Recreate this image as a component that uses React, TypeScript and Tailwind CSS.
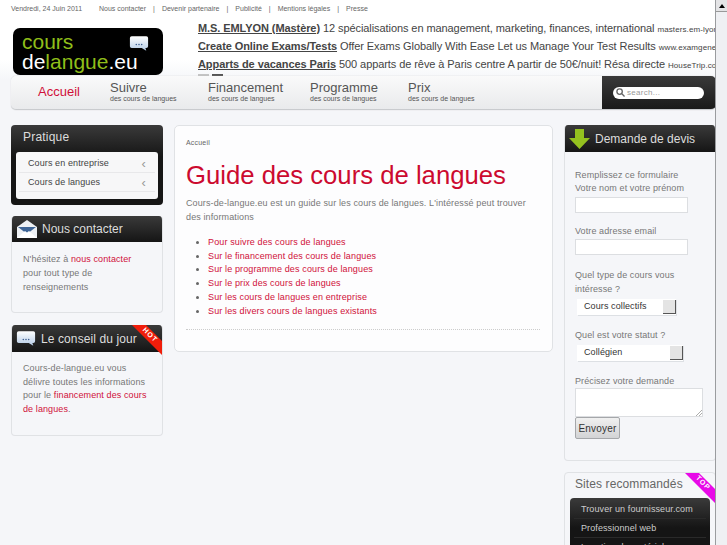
const sans = "font-['Liberation_Sans',Arial,sans-serif]";

const topLinks = ["Nous contacter", "Devenir partenaire", "Publicité", "Mentions légales", "Presse"];

const ads = [
  { title: "M.S. EMLYON (Mastère)", text: "12 spécialisations en management, marketing, finances, international", url: "masters.em-lyon.com" },
  { title: "Create Online Exams/Tests", text: "Offer Exams Globally With Ease Let us Manage Your Test Results", url: "www.examgenerator.com" },
  { title: "Apparts de vacances Paris", text: "500 apparts de rêve à Paris centre A partir de 50€/nuit! Résa directe", url: "HouseTrip.com" },
];

const navItems = [
  { label: "Suivre", w: "w-[98px]" },
  { label: "Financement", w: "w-[102px]" },
  { label: "Programme", w: "w-[98px]" },
  { label: "Prix", w: "w-[90px]" },
];

const guideLinks = [
  "Pour suivre des cours de langues",
  "Sur le financement des cours de langues",
  "Sur le programme des cours de langues",
  "Sur le prix des cours de langues",
  "Sur les cours de langues en entreprise",
  "Sur les divers cours de langues existants",
];

function ChatIcon({ className }: { className?: string }) {
  return (
    <svg viewBox="0 0 22 18" className={className}>
      <defs>
        <linearGradient id="bubble" x1="0" y1="0" x2="0" y2="1">
          <stop offset="0" stopColor="#ffffff" />
          <stop offset="1" stopColor="#b4cbe6" />
        </linearGradient>
      </defs>
      <path d="M3 1h16a2 2 0 0 1 2 2v9a2 2 0 0 1-2 2h-1l1 3-5-3H3a2 2 0 0 1-2-2V3a2 2 0 0 1 2-2z" fill="url(#bubble)" />
      <circle cx="8" cy="10" r=".8" fill="#33558a" />
      <circle cx="11" cy="10" r=".8" fill="#33558a" />
      <circle cx="14" cy="10" r=".8" fill="#33558a" />
    </svg>
  );
}

function MailIcon() {
  return (
    <svg viewBox="0 0 20 18" className="w-[20px] h-[18px] shrink-0">
      <path d="M0 7 10 0l10 7v11H0z" fill="#eef1f5" />
      <path d="M1 7h18l-9 7z" fill="#3f6597" />
      <path d="M0 18l8-7 2 1.500 2-1.500 8 7z" fill="#ffffff" />
    </svg>
  );
}

function ArrowIcon() {
  return (
    <svg viewBox="0 0 21 20" className="w-[21px] h-[20px] shrink-0">
      <path d="M6 0h9v9h6L10.500 20 0 9h6z" fill="#94c11f" />
    </svg>
  );
}

function Ribbon({ label, color }: { label: string; color: string }) {
  return (
    <div className="absolute top-0 right-0 w-[30px] h-[30px]">
      <div className={`absolute inset-0 [clip-path:polygon(0_0,14px_0,30px_16px,30px_30px)] ${color}`} />
      <div className="absolute w-[30px] h-[12px] top-[4px] left-[3px] rotate-45 text-center text-white text-[7px] leading-[12px] font-bold tracking-[1px]">
        {label}
      </div>
    </div>
  );
}

function SelectBox({ label, w, arrow }: { label: string; w: string; arrow: string }) {
  return (
    <div className={`h-[16px] bg-white flex items-center justify-between shadow-[1px_1px_0_#dde0e4] ${w}`}>
      <span className="pl-[7px] text-[9px] text-[#333]">{label}</span>
      <span className={`h-[14px] bg-[#e4e4e4] border-r border-b border-[#555] ${arrow}`} />
    </div>
  );
}

export default function App() {
  return (
    <div className={`${sans} flex w-[727px] h-[545px] overflow-hidden bg-[linear-gradient(#ffffff_0,#ffffff_60px,#f5f6f9_80px)] text-[#777]`}>
      <div className="w-[715px] shrink-0 pl-[11px] overflow-hidden">
        <div className="flex items-center h-[17px] pt-[1px] text-[7px] text-[#666]">
          <span className="w-[88px]">Vendredi, 24 Juin 2011</span>
          {topLinks.map((t, i) => (
            <span key={t} className="flex items-center">
              {i > 0 && <span className="mx-[7px]">|</span>}
              {t}
            </span>
          ))}
        </div>

        <div className="flex h-[59px] pt-[11px]">
          <div className="w-[150px] h-[47px] ml-[2px] rounded-[7px] bg-black relative shrink-0 px-[9px] leading-[20px] pt-[4px] text-[21px]">
            <div className="text-[#8fbe1a]">cours</div>
            <div className="text-white">
              de<span className="text-[#8fbe1a]">langue</span>.eu
            </div>
            <ChatIcon className="absolute top-[7px] right-[14px] w-[20px] h-[17px]" />
          </div>
          <div className="ml-[35px] flex-1 min-w-0 overflow-hidden text-[11px] text-[#444] tracking-[-0.08px] whitespace-nowrap -mt-[9px]">
            {ads.map((ad) => (
              <div key={ad.title} className="h-[18px] leading-[18px]">
                <span className="font-bold underline">{ad.title}</span> {ad.text}{" "}
                <span className="text-[8px] tracking-[0.1px]">{ad.url}</span>
              </div>
            ))}
            <div className="flex gap-[3px] mt-[1px]">
              <span className="w-[11px] h-[3px] bg-[#c4c4c4]" />
              <span className="w-[11px] h-[3px] bg-[#555]" />
            </div>
          </div>
        </div>

        <div className="relative w-[705px] h-[34px] flex rounded-[5px] overflow-hidden border-b border-[#c9cbce] shadow-[0_0_1px_#bbb] bg-[linear-gradient(#fafafa,#e9eaec)]">
          <div className="flex flex-1 items-center pb-[1px]">
            <span className="w-[99px] pl-[27px] text-[13px] text-[#d0103a]">Accueil</span>
            {navItems.map((n) => (
              <div key={n.label} className={n.w}>
                <div className="text-[13px] leading-[13px] text-[#555]">{n.label}</div>
                <div className="text-[7px] leading-[9px] text-[#555]">des cours de langues</div>
              </div>
            ))}
          </div>
          <div className="w-[114px] bg-[linear-gradient(#3a3a3a,#1a1a1a)] flex items-center pl-[11px] shrink-0">
            <div className="w-[91px] h-[12px] rounded-full bg-white flex items-center pl-[3px] gap-[2px]">
              <svg viewBox="0 0 10 10" className="w-[9px] h-[9px]" fill="none" stroke="#666" strokeWidth="1.500">
                <circle cx="4" cy="4" r="3" />
                <path d="M6.500 6.500 9.500 9.500" />
              </svg>
              <span className="text-[8px] text-[#999] tracking-[0.3px]">search...</span>
            </div>
          </div>
        </div>

        <div className="flex gap-[11px] mt-[15px] items-start w-[705px]">
          <div className="w-[152px] flex flex-col gap-[11px] shrink-0">
            <section className="h-[80px] rounded-[4px] bg-[linear-gradient(#3a3a3a,#151515_40%,#151515)] px-[5px]">
              <h3 className="text-[12px] h-[27px] leading-[25px] pl-[7px] text-[#ddd] tracking-[0.2px]">Pratique</h3>
              <div className="h-[47px] rounded-[3px] bg-[#f7f7f8] text-[9px] text-[#444] tracking-[0.1px]">
                {["Cours en entreprise", "Cours de langues"].map((l) => (
                  <div key={l} className="flex items-center justify-between h-[19px] mx-[3px] pt-[1px] first:h-[21px] first:pt-[3px] pl-[9px] pr-[9px] border-b border-[#e8e8ea]">
                    <span>{l}</span>
                    <span className="text-[13px] leading-none text-[#999]">‹</span>
                  </div>
                ))}
              </div>
            </section>

            <section className="h-[97px] rounded-[4px] border border-[#e0e2e5] border-t-0 overflow-hidden">
              <div className="h-[26px] -mx-[1px] flex items-center gap-[5px] pl-[6px] bg-[linear-gradient(#3a3a3a,#151515)]">
                <MailIcon />
                <span className="text-[12px] text-[#ddd]">Nous contacter</span>
              </div>
              <p className="text-[9px] leading-[14px] px-[11px] pt-[10px] tracking-[0.1px]">
                N'hésitez à <span className="text-[#d0103a]">nous contacter</span> pour tout type de renseignements
              </p>
            </section>

            <section className="relative h-[111px] mt-[1px] rounded-[4px] border border-[#e0e2e5] border-t-0 overflow-hidden">
              <div className="h-[27px] -mx-[1px] flex items-center gap-[5px] pl-[5px] bg-[linear-gradient(#3a3a3a,#151515)]">
                <ChatIcon className="w-[20px] h-[17px] shrink-0" />
                <span className="text-[12px] text-[#ddd] tracking-[0.1px]">Le conseil du jour</span>
              </div>
              <Ribbon label="HOT" color="bg-[#f01d0a]" />
              <p className="text-[9px] leading-[13.500px] px-[11px] pt-[10px] tracking-[0.1px]">
                Cours-de-langue.eu vous délivre toutes les informations pour le{" "}
                <span className="text-[#d0103a]">financement des cours de langues</span>.
              </p>
            </section>
          </div>

          <main className="w-[379px] h-[227px] shrink-0 rounded-[5px] border border-[#e0e2e5] bg-[#fdfdfe] px-[11px] pt-[12px]">
            <div className="text-[7px] leading-[9px] text-[#666] tracking-[0.2px]">Accueil</div>
            <h1 className="text-[25.700px] leading-[34px] mt-[11px] text-[#cc0a2f]">Guide des cours de langues</h1>
            <p className="text-[9px] leading-[14px] mt-[4px] tracking-[0.12px]">
              Cours-de-langue.eu est un guide sur les cours de langues. L'intéressé peut trouver des informations
            </p>
            <ul className="list-disc pl-[22px] mt-[12px] text-[9px] leading-[13.700px] text-[#d0103a] tracking-[0.13px] marker:text-[#666]">
              {guideLinks.map((l) => (
                <li key={l}>{l}</li>
              ))}
            </ul>
            <div className="mt-[11px] border-b border-dotted border-[#ccc] mr-[1px]" />
          </main>

          <div className="w-[152px] flex flex-col gap-[11px] shrink-0">
            <section className="h-[336px] rounded-[4px] border border-[#e0e2e5] border-t-0 overflow-hidden">
              <div className="h-[27px] -mx-[1px] flex items-center gap-[5px] pl-[5px] bg-[linear-gradient(#3a3a3a,#151515)]">
                <ArrowIcon />
                <span className="text-[12px] text-[#ddd]">Demande de devis</span>
              </div>
              <div className="px-[10px] pt-[17px] text-[9px] tracking-[0.1px]">
                <div className="leading-[13px]">Remplissez ce formulaire</div>
                <div className="leading-[13px]">Votre nom et votre prénom</div>
                <div className="w-[113px] h-[16px] bg-white border border-[#dcdee1] mt-[2px]" />
                <div className="leading-[13px] mt-[12px]">Votre adresse email</div>
                <div className="w-[113px] h-[16px] bg-white border border-[#dcdee1] mt-[1px]" />
                <div className="leading-[14px] mt-[13px]">Quel type de cours vous intéresse ?</div>
                <div className="mt-[3px] ml-[2px]">
                  <SelectBox label="Cours collectifs" w="w-[99px]" arrow="w-[13px]" />
                </div>
                <div className="leading-[13px] mt-[14px]">Quel est votre statut ?</div>
                <div className="mt-[3px] ml-[2px]">
                  <SelectBox label="Collégien" w="w-[106px]" arrow="w-[13px]" />
                </div>
                <div className="leading-[13px] mt-[14px]">Précisez votre demande</div>
                <div className="relative w-[128px] h-[29px] bg-white border border-[#dcdee1]">
                  <svg viewBox="0 0 6 6" className="absolute right-0 bottom-0 w-[6px] h-[6px]" stroke="#888" strokeWidth="0.700">
                    <path d="M0 6 6 0M3 6 6 3" />
                  </svg>
                </div>
                <button className="block w-[45px] h-[22px] rounded-[2px] border border-[#a5a7aa] bg-[linear-gradient(#f0f0f0,#d2d3d5)] text-[10px] text-[#333] tracking-[0.2px]">
                  Envoyer
                </button>
              </div>
            </section>

            <section className="relative h-[120px] rounded-[4px] border border-[#e0e2e5] overflow-hidden">
              <h3 className="text-[12px] h-[25px] leading-[23px] pl-[10px] text-[#666] tracking-[0.1px]">Sites recommandés</h3>
              <Ribbon label="TOP" color="bg-[#e809e8]" />
              <div className="mx-[5px] h-[90px] rounded-t-[4px] bg-[linear-gradient(#3a3a3a,#151515_30px)] text-[9px] text-[#ccc] tracking-[0.1px]">
                {["Trouver un fournisseur.com", "Professionnel web", "Location de matériel"].map((l) => (
                  <div key={l} className="h-[19px] mx-[4px] pl-[7px] pt-[3px] first:h-[21px] first:pt-[5px] leading-[13px] border-b border-[#2a2a2a]">
                    {l}
                  </div>
                ))}
              </div>
            </section>
          </div>
        </div>
      </div>

      <div className="w-[12px] shrink-0 h-[545px] bg-[#eff0f3] border-l border-[#9a9c9f] flex flex-col">
        <div className="h-[12px] bg-[#e4e4e6] border-b border-[#999] flex items-center justify-center">
          <div className="w-0 h-0 border-x-[3px] border-x-transparent border-b-[4px] border-b-black" />
        </div>
      </div>
    </div>
  );
}
